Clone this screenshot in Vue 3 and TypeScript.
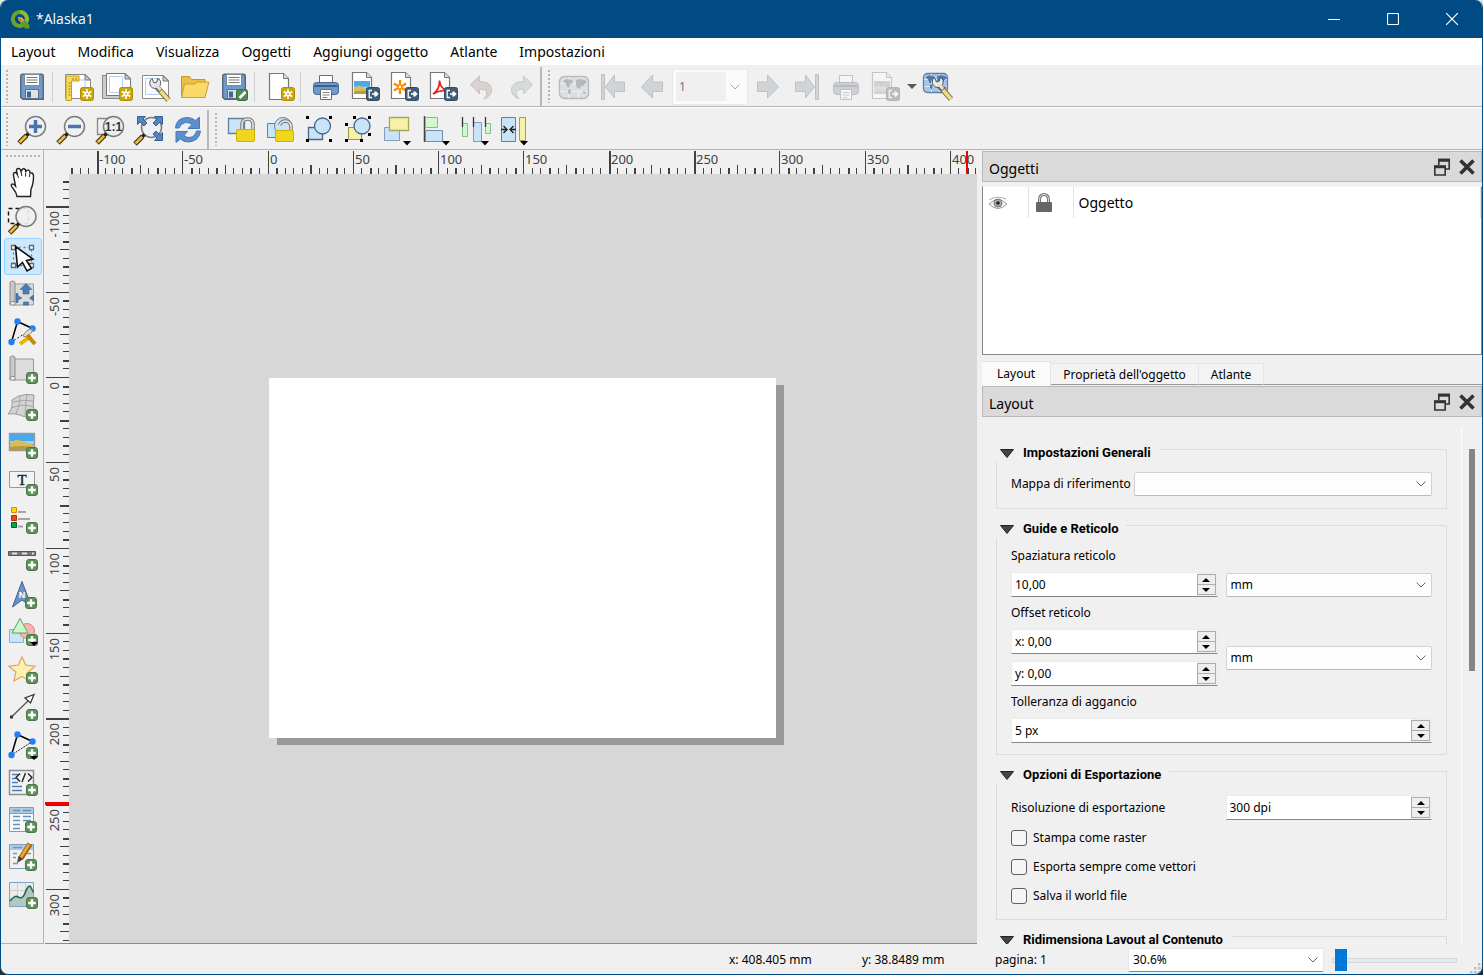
<script setup lang="ts">
import { computed, onBeforeUnmount, onMounted, ref } from 'vue'

interface Tool {
  id: string
  label: string
  sep?: boolean
  disabled?: boolean
  faded?: boolean
}

const menus = ['Layout', 'Modifica', 'Visualizza', 'Oggetti', 'Aggiungi oggetto', 'Atlante', 'Impostazioni']

/* badges shared by several icons */
const plus = (x: number, y: number) =>
  `<g transform="translate(${x} ${y})"><rect x=".5" y=".5" width="11" height="11" rx="2.5" fill="#5c915b" stroke="#477a47"/><path d="M6 2.2v7.6M2.2 6h7.6" stroke="#fff" stroke-width="2.4"/></g>`
const sun = (x: number, y: number) =>
  `<g transform="translate(${x} ${y})"><rect x=".5" y=".5" width="13" height="13" rx="2" fill="#cba60a" stroke="#b28f00"/><circle cx="7" cy="7" r="2.6" fill="#fff"/><path d="M7 2v10M2.7 4.5l8.6 5M2.7 9.5l8.6-5" stroke="#fff" stroke-width="1.5"/><circle cx="7" cy="7" r="1" fill="#cba60a"/></g>`
const exp = (x: number, y: number) =>
  `<g transform="translate(${x} ${y})"><rect x=".5" y=".5" width="13" height="13" rx="2" fill="#415d78" stroke="#34495e"/><path d="M6 3.5H3.2v7H6M6 7h5.5M9 4.5v5M9.4 4.8L11.8 7 9.4 9.2" fill="none" stroke="#fff" stroke-width="1.3"/></g>`
const lens = (x: number, y: number) =>
  `<g transform="translate(${x} ${y})"><circle cx="0" cy="0" r="10" fill="#eef0f1" fill-opacity=".9" stroke="#7b7b7b" stroke-width="1.5"/><path d="M-7 7l-3 3" stroke="#222" stroke-width="3.5"/><path d="M-9 9l-7.5 7.5" stroke="#4d4018" stroke-width="5"/><path d="M-9.4 9.4l-6.5 6.5" stroke="#f2bd3d" stroke-width="2.6"/></g>`
const floppy =
  `<path d="M4.7 5.2q0-2 2-2h18.6q2 0 2 2v23H6.7l-2-2z" fill="#6f9acb" stroke="#53657b" stroke-width="1.4"/><path d="M8.5 3.5h15v11h-15z" fill="#fff" stroke="#7c8894"/><path d="M10.5 6.5h11M10.5 9h11M10.5 11.5h11" stroke="#777" stroke-width="1.2"/><path d="M9.5 18.5h13v9h-13z" fill="#dfe3e8" stroke="#5f6e80"/><path d="M11 20.5h4v6h-4z" fill="#3c6596"/>`
const printer =
  `<path d="M9.5 4.5h13v8h-13z" fill="#fff" stroke="#6c6c6c"/><rect x="3.5" y="11.5" width="25" height="12" rx="3" fill="#6f9acb" stroke="#43658f"/><path d="M4.500 15h23" stroke="#3f5f88" stroke-width="2"/><path d="M10.500 18.500h11v10h-11z" fill="#fff" stroke="#6c6c6c"/><path d="M12.500 21.500h7M12.500 24h7M12.500 26.500h5" stroke="#888"/>`
const sheet = '<path d="M3.500 1.500h14l5 5v21h-19z" fill="#fff" stroke="#777" stroke-width="1.2"/><path d="M17.500 1.500v5h5" fill="#ddd" stroke="#777"/>'
const picture = (x: number, y: number, w: number, h: number) =>
  `<svg x="${x}" y="${y}" width="${w}" height="${h}" viewBox="0 0 24 16" preserveAspectRatio="none"><path d="M0 0h24v16H0z" fill="#4aa8ee"/><path d="M0 7h24v3H0z" fill="#9dd2f5"/><path d="M0 9l6.500-3.500L24 11v5H0z" fill="#d8bd5e"/><path d="M0 13q12-2 24 0v3H0z" fill="#b79b38"/></svg>`
const down = '<path d="M22 27h8l-4 4.500z" fill="#000"/>'
const world =
  `<path d="M5 10l4-2 5 1 1 3-3 1-1 4-2-1-1-3zM18 9l3-1 6 1 2 3-3 1-1 3-2-2-1 4-3-1-1-4zM10 18l3 1-1 5-2-2zM25 20l3 1-1 2-2-1z"/>`
const wrench =
  `<path d="M15 13.500L27 27" stroke="#6f6840" stroke-width="5.500"/><path d="M19 18l8 9" stroke="#f1dc84" stroke-width="3.500"/><path d="M18 6.500a5.500 5.500 0 1 1-7.500-1l2 4.500 3-1 .5-3.500z" fill="#e8eaec" stroke="#555"/><path d="M14 11l5 6" stroke="#dfe2e4" stroke-width="3"/>`
const nodes = (dash: string) =>
  `<path d="M10.500 5.500L4.500 26" stroke="#000" stroke-width="1.500"/><path d="M10.500 5.500l15 7" stroke="#000" stroke-width="1.500"/><path d="M25.500 12.500L4.500 26" stroke="#222" stroke-dasharray="${dash}"/><circle cx="10.500" cy="5.500" r="3.200" fill="#237df5"/><circle cx="25.500" cy="12.500" r="3.200" fill="#237df5"/><circle cx="4.500" cy="26" r="3.200" fill="#237df5"/>`
const corners = '<path d="M3 2h3v3H3zM26 2h3v3h-3zM3 25h3v3H3zM26 25h3v3h-3z" fill="#000"/>'
const scroll = '<path d="M6 5h20.500v21H6z" fill="#dcdcdc" stroke="#999"/><path d="M3 4q0-2 2.500-2T8 4v18.500H5.500Q3 22.500 3 25z" fill="#c9c9c9" stroke="#8d8d8d"/><path d="M3 25q0-2.500 2.500-2.500H8V26H3z" fill="#eee" stroke="#8d8d8d"/>'
const lock = '<path d="M17 16v-5q0-6 5.500-6t5.500 6v5" fill="none" stroke="#777" stroke-width="3.600"/><path d="M17 16v-5q0-6 5.500-6t5.500 6v5" fill="none" stroke="#e6e6e6" stroke-width="1.600"/><rect x="11.500" y="15.500" width="18" height="12" rx="1.500" fill="#f0d61c" stroke="#cfb000"/>'

const icons: Record<string, string> = {
  save: floppy,
  newLayout: `<path d="M3.500 3.500h20l5 5v19h-25z" fill="#fff" stroke="#888"/><path d="M23 3.500v5.500h5.500z" fill="#ccc" stroke="#777"/><path d="M12 9h11v15" fill="none" stroke="#b9cdf2"/><path d="M4 5h13v5H9.500v19.500H4z" fill="#f6d95e" stroke="#c79f10"/><path d="M6.500 12h2M6.500 15h2M6.500 18h2M6.500 21h2M6.500 24h2M11 7v2M14 7v2" stroke="#a37c00"/>${sun(18, 16)}`,
  duplicate: `<path d="M1.500 4.500h22v23h-22z" fill="#ccc" stroke="#888"/><path d="M5.500 2.500h19l5 5v17h-24z" fill="#fff" stroke="#777"/><path d="M24 2.500V8h5.500z" fill="#ccc" stroke="#777"/><path d="M8.500 5.500h13v16h-13z" fill="none" stroke="#b9cdf2"/>${sun(18, 16)}`,
  manager: `<path d="M2.500 4.500h21l5 5v18h-26z" fill="#fff" stroke="#888"/><path d="M23 4.500V10h5.500z" fill="#ccc" stroke="#777"/><path d="M5.500 7.500h14v16h-14z" fill="#f7faff" stroke="#b9cdf2"/><g transform="translate(1.500 2)">${wrench}</g>`,
  open: `<path d="M2.500 26V5.500h8l2 3h13.500V12" fill="#e9bf44" stroke="#c29620"/><path d="M2.500 26.500l3-13.500H16l2-2h12l-4 15.500z" fill="#fbd968" stroke="#c9a032"/>`,
  saveTemplate: `${floppy}<rect x="18.500" y="18.500" width="11" height="11" rx="2" fill="#4f8a57" stroke="#35703d"/><path d="M21.500 27l6-6" stroke="#fff" stroke-width="2.600"/>`,
  addPage: `<g transform="translate(2 1)">${sheet}</g>${sun(17, 16)}`,
  print: printer,
  exportImage: `${sheet}${picture(5, 10, 16, 13)}${exp(17, 16)}`,
  exportSvg: `${sheet}<path d="M12 9v14M5.800 12.500l12.400 7M5.800 19.500l12.400-7" stroke="#fb8c00" stroke-width="2.400"/><circle cx="12" cy="16" r="1.200" fill="#fff"/>${exp(17, 16)}`,
  exportPdf: `${sheet}<path d="M6 23q7-5 6.500-13.500Q13 17 20 20q-7-1.500-14 3z" fill="none" stroke="#e2231a" stroke-width="1.700"/>${exp(17, 16)}`,
  undo: '<path d="M4.500 13.500l9-8.500v5.500q12 0 12 8.500 0 6-7.500 9 4-4.500 2.500-7.500-1.500-2.500-7-2.500v5z" fill="#d8d3d0" stroke="#c8c1bd"/>',
  redo: '<path d="M27.500 13.500l-9-8.500v5.500q-12 0-12 8.500 0 6 7.500 9-4-4.500-2.500-7.500 1.500-2.500 7-2.500v5z" fill="#d6dad8" stroke="#c5cbc9"/>',
  atlas: `<rect x="1.500" y="5.500" width="29" height="22" rx="5" fill="#dcdfe0" stroke="#b7babc" stroke-width="1.400"/><path d="M2 12.500h28M2 20.500h28M10.500 6v21M20.500 6v21" stroke="#eff0f1"/><g fill="#b4b8bb">${world}</g>`,
  first: '<path d="M4.500 3.500h3v25h-3zM27.500 11v9.500H17.500V27L8.500 16l9-12v7z" fill="#d0d4d7" stroke="#bdc1c4"/>',
  prev: '<path d="M26.500 11v9.500H16.500V27L5.500 16l11-12v7z" fill="#d0d4d7" stroke="#bdc1c4"/>',
  next: '<path d="M5.500 11v9.500h10V27l11-11-11-12v7z" fill="#d0d4d7" stroke="#bdc1c4"/>',
  last: '<path d="M24.500 3.500h3v25h-3zM4.500 11v9.500h10V27l9-11-9-12v7z" fill="#d0d4d7" stroke="#bdc1c4"/>',
  atlasSettings: `<rect x="1.500" y="2.500" width="24" height="19" rx="4" fill="#a9c6e8" stroke="#5d7fa8" stroke-width="1.300"/><path d="M2 8.500h23M2 15.500h23M9.500 3v18M17.500 3v18" stroke="#dbe9f7"/><g fill="#4d78aa" transform="translate(-1 -3) scale(.9)">${world}</g><g transform="translate(2 1)">${wrench}</g>`,
  zoomIn: `${lens(19.5, 12.5)}<path d="M19.500 6v13M13 12.500h13" stroke="#4a74ab" stroke-width="3.500"/>`,
  zoomOut: `${lens(19.5, 12.5)}<path d="M13 12.500h13" stroke="#4a74ab" stroke-width="3.500"/>`,
  zoomActual: `<path d="M3.500 4.500h18v16h-18z" fill="#eee" stroke="#888" stroke-width="1.300"/>${lens(19.5, 12.5)}<text x="19.500" y="17" text-anchor="middle" font-family="Liberation Sans, sans-serif" font-size="12" font-weight="700" fill="#333">1:1</text>`,
  zoomFull: `${lens(18.5, 13.5)}<path d="M4.500 2.500h8L10 5l4 4-3 3-4-4-2.500 2.500zM29.500 2.500h-8L24 5l-4 4 3 3 4-4 2.500 2.500zM29.500 26.500h-8L24 24l-4-4 3-3 4 4 2.500-2.500z" fill="#5285bd" stroke="#385f8f"/>`,
  refresh: '<path d="M3.500 14Q4 4 15 3.500q5 0 8.500 3l4-3.500v11.500H16l4-4q-3-2.500-6.500-2-5 1-6.500 5.500z" fill="#5d8fd0" stroke="#4778b8"/><path d="M28.500 17q-1 10-12 11-5 0-8-3l-4.500 3.500V17.500H15.500l-3.500 4q3 2.500 6 2 5-1 6.500-6.500z" fill="#5d8fd0" stroke="#4778b8"/>',
  lock: `<path d="M3.500 4.500h16v15h-16z" fill="#c8e4f6" stroke="#5a83a6" stroke-width="1.300"/>${lock}`,
  unlock: `<path d="M3.500 9.500h14v14h-14z" fill="#c8e4f6" stroke="#5a83a6"/><circle cx="19" cy="12" r="8.500" fill="#c8e4f6" stroke="#5a83a6"/><path d="M15.500 11q2-4.500 7-4 5.500 1.500 4.500 9" fill="none" stroke="#777" stroke-width="3.600"/><path d="M15.500 11q2-4.500 7-4 5.500 1.500 4.500 9" fill="none" stroke="#e6e6e6" stroke-width="1.600"/><rect x="11.500" y="16.500" width="18" height="11" rx="1.500" fill="#f0d61c" stroke="#cfb000"/>`,
  group: `<path d="M5.500 13.500h14v12h-14z" fill="#c8e4f6" stroke="#46658a" stroke-width="1.300"/><circle cx="19.500" cy="12" r="8" fill="#c8e4f6" stroke="#46658a" stroke-width="1.300"/>${corners}`,
  ungroup: `<path d="M6.500 13.500h13v12h-13z" fill="#f5f1a8" stroke="#9a944b"/><circle cx="20" cy="12" r="8" fill="#c8e4f6" stroke="#46658a" stroke-width="1.300"/><path d="M11 2h3v3h-3zM26 2h3v3h-3zM3 9h3v3H3zM26 19h3v3h-3zM3 25h3v3H3zM18 25h3v3h-3z" fill="#000"/>`,
  raise: `<path d="M3.500 13.500h15v13h-15z" fill="#c8e4f6" stroke="#7f9fb8"/><path d="M8.500 3.500h19v13h-19z" fill="#f5f1a8" stroke="#a8a45b" stroke-width="1.300"/>${down}`,
  align: `<path d="M4.500 2v26" stroke="#444" stroke-width="1.500"/><path d="M5.500 3.500h12v10h-12z" fill="#cdfbcf" stroke="#87bd89"/><path d="M5.500 16.500h17v11h-17z" fill="#c8e4f6" stroke="#6f8ea8"/>${down}`,
  distribute: `<path d="M3.500 9.500h5v13h-5z" fill="#cdfbcf" stroke="#87bd89"/><path d="M14.500 8.500h8v19h-8z" fill="#c8e4f6" stroke="#7f9fb8"/><path d="M26.500 9.500h5v10h-5z" fill="#cdfbcf" stroke="#87bd89"/><path d="M3.500 3v10M14.500 3v10M26.500 3v10" stroke="#333" stroke-width="1.300"/>${down}`,
  resize: `<path d="M3.500 3.500h14v24h-14z" fill="#c8e4f6" stroke="#5f80a0"/><path d="M21.500 3.500h6v23h-6z" fill="#f5f1a8" stroke="#a39f55"/><path d="M3 15.500h5.500M5.500 12l3.500 3.500L5.500 19M18 15.500h-5.500M15.500 12L12 15.500l3.500 3.500" fill="none" stroke="#222" stroke-width="1.400"/>${down}`,

  pan: '<path d="M10 30.500q-.5-4-3.500-7.500-3-3.500-2-4.500 1.500-1.500 4 1.500L6.500 9.500Q6 6.500 8 6.500t2.500 2.500L9.500 5Q9.500 2.500 11.500 2.500T14 5.500L14.500 5q.5-2.500 2.500-2.200T18.700 6l.3-.5q.8-1.800 2.500-1.300T23 7l.5-.3q3 0 3 3.300 0 8-2.500 13l-.5 7.500z" fill="#fff" stroke="#222" stroke-width="1.400"/><path d="M10.500 9l1 3M14.200 6l.6 4M18.700 6.500l-.1 4M22.800 8l-.5 3" fill="none" stroke="#222"/>',
  zoomTool: `<path d="M1.500 4.500h20v15h-20z" fill="none" stroke="#111" stroke-width="1.400" stroke-dasharray="4 3"/>${lens(19, 12.5)}`,
  select: '<path d="M6.500 6.500h18v18h-18z" fill="none" stroke="#777" stroke-width="1.300" stroke-dasharray="2 3"/><path d="M4.500 4.500h4v4h-4zM22.500 4.500h4v4h-4zM4.500 22.500h4v4h-4zM22.500 22.500h4v4h-4z" fill="#fff" stroke="#666" stroke-width="1.300"/><path d="M8.500 5.500l2 20.500 5-4.500 4.500 8.500 4.500-2.500-5-8 6.500-1.500z" fill="#fff" stroke="#111" stroke-width="1.600"/>',
  moveContent: `${scroll}<path d="M19 4.500l6 6h-3v4.500h-6v-4.500h-3zM9 14.500h2v2.500l4 2-4 2v2.500H9zM26.500 16v6l-4-3zM16.500 23h5v3h-5z" fill="#4b7cb0" stroke="#3a6696" stroke-width=".6"/>`,
  editNodes: `${nodes('2 2')}<path d="M16 20q3-7 10-7-1 5-7 8z" fill="#ddd" stroke="#888"/><path d="M13 28l11-8" stroke="#e5b800" stroke-width="4"/><path d="M20 19l8 9" stroke="#c9850c" stroke-width="4"/>`,
  addMap: `${scroll}${plus(19, 18)}`,
  add3d: `<path d="M1 23q5-5 4-14 6-5 14-5.500l8 .5q-2 10 1 20-8 4-15 0-6-2-12-1z" fill="#d4d4d4" stroke="#999"/><path d="M4 17q12-5 23-1M6 11q10-3 21-1M9 23q4-9 4-18M18 25q0-10 2-21" fill="none" stroke="#a5a5a5"/>${plus(19, 18)}`,
  addPicture: `${picture(3, 5, 24, 16)}<path d="M2.500 4.500h25v17h-25z" fill="none" stroke="#999" stroke-width="1.400"/>${plus(19, 18)}`,
  addLabel: `<path d="M2.500 5.500h25v16h-25z" fill="#f3f3f3" stroke="#999"/><text x="15" y="18.500" text-anchor="middle" font-family="Liberation Serif, serif" font-size="15" fill="#222" stroke="#222" stroke-width=".4">T</text>${plus(19, 18)}`,
  addLegend: `<path d="M4.500 3.500h5v5h-5z" fill="#ffd700" stroke="#e88a00"/><path d="M4.500 11.500h5v5h-5z" fill="#f04a12" stroke="#b62f00"/><path d="M4.500 18.500h5v5h-5z" fill="#00a651" stroke="#00602f"/><path d="M11 8h8M11 15h12M11 22.500h5" stroke="#a5a5a5" stroke-width="2"/>${plus(19, 18)}`,
  addScale: `<path d="M1.500 10.500h27v4h-27z" fill="#777" stroke="#555"/><path d="M5 12.500h5M15 12.500h5M25 12.500h2" stroke="#ddd" stroke-width="2"/>${plus(19, 18)}`,
  addNorth: `<path d="M15 2.500l9.500 25L15 21 5.500 28z" fill="#6c93c4" stroke="#3d5f8d"/><text x="15" y="19" text-anchor="middle" font-family="Liberation Sans, sans-serif" font-size="9" font-weight="700" fill="#fff">N</text>${plus(18, 18)}`,
  addShape: `<path d="M2.500 13.500h14v13h-14z" fill="#c8e4f6" stroke="#8ab0cc"/><circle cx="20" cy="15" r="7.500" fill="#f9b4b4" stroke="#d98585"/><path d="M13 2.500l8 14.500H5z" fill="#cdf7cb" stroke="#5ca35b"/>${plus(19, 18)}<path d="M23 26h8l-4 4z" fill="#000"/>`,
  addMarker: `<path d="M15 3l3.800 8.200 9.200 1-6.800 6 2 9-8.200-4.700L7 27l1.800-9L2 12.200l9.200-1z" fill="#fdefb0" stroke="#e0a76c" stroke-width="1.300"/>${plus(19, 18)}`,
  addArrow: `<path d="M4.500 26L23 8" stroke="#555" stroke-width="1.300"/><path d="M3 24.500h3v3H3z" fill="#333"/><path d="M27 3.500l-9 3.500 5.500 5z" fill="#fff" stroke="#333" stroke-width="1.300"/>${plus(19, 18)}`,
  addNodeItem: `${nodes('2 1')}${plus(19, 18)}<path d="M23 27h8l-4 4z" fill="#000"/>`,
  addHtml: `<path d="M2.500 4.500h24v24h-24z" fill="#f2f2f2" stroke="#8c8c8c" stroke-width="1.400"/><path d="M5 8.500h6M5 12.500h4M5 16.500h6M5 20.500h10M5 24.500h10" stroke="#4e80b8" stroke-width="1.600"/><path d="M13 7.500l-4 4 4 4M21 7.500l4 4-4 4M18.500 7l-3.500 9" fill="none" stroke="#222" stroke-width="1.400"/>${plus(19, 18)}`,
  addTable: `<path d="M2.500 3.500h24v24h-24z" fill="#f6fafd" stroke="#7f9cba"/><path d="M3 4h23v5H3z" fill="#a5cde8"/><path d="M2.500 9.500h24" stroke="#7f9cba"/><path d="M6 6.500h7M16 6.500h8M6 12.500h7M16 12.500h8M6 16.500h7M16 16.500h8M6 20.500h7M6 24.500h7" stroke="#6d8fb4" stroke-width="1.600"/>${plus(18, 17)}`,
  addManualTable: `<path d="M2.500 3.500h24v24h-24z" fill="#f1f1f1" stroke="#7f9cba"/><path d="M3 4h23v5H3z" fill="#a5cde8"/><path d="M6 6.500h9M6 12.500h4M6 16.500h3M6 22.500h5M20 12.500h4" stroke="#8495a8" stroke-width="1.500"/><path d="M23 3l-9 14" stroke="#a5660f" stroke-width="5.500"/><path d="M22 3.500L13.500 17" stroke="#eda83c" stroke-width="2.500"/><path d="M11.500 15l5 3-6.500 4z" fill="#444"/>${plus(18, 18)}`,
  addProfile: `<path d="M2.500 3.500h24v24h-24z" fill="#ececec" stroke="#7da3cc"/><path d="M3 11.500h23M3 19.500h23M10.500 4v23M18.500 4v23" stroke="#d0d0d0"/><path d="M3 22q5-7 9-3 4 2 6-4 4-11 6-6l2 5v13H3z" fill="#b3c9bf"/><path d="M3 22q5-7 9-3.500 4 1.500 6-4.500 4-10 6-5.500l2.500 5" fill="none" stroke="#1d6a54" stroke-width="1.600"/>${plus(19, 18)}`,
}

const fileTools: Tool[] = [
  { id: 'save', label: 'Salva progetto' },
  { id: 'newLayout', label: 'Nuovo layout', sep: true },
  { id: 'duplicate', label: 'Duplica layout' },
  { id: 'manager', label: 'Gestore layout' },
  { id: 'open', label: 'Aggiungi da modello' },
  { id: 'saveTemplate', label: 'Salva come modello' },
  { id: 'addPage', label: 'Aggiungi pagine', sep: true },
  { id: 'print', label: 'Stampa', sep: true },
  { id: 'exportImage', label: 'Esporta come immagine' },
  { id: 'exportSvg', label: 'Esporta come SVG' },
  { id: 'exportPdf', label: 'Esporta come PDF' },
  { id: 'undo', label: 'Annulla', disabled: true },
  { id: 'redo', label: 'Ripristina', disabled: true },
]
const atlasBefore: Tool[] = [
  { id: 'atlas', label: 'Anteprima atlante', disabled: true },
  { id: 'first', label: 'Primo elemento', disabled: true },
  { id: 'prev', label: 'Elemento precedente', disabled: true },
]
const atlasAfter: Tool[] = [
  { id: 'next', label: 'Elemento successivo', disabled: true },
  { id: 'last', label: 'Ultimo elemento', disabled: true },
  { id: 'print', label: 'Stampa atlante', disabled: true, faded: true },
  { id: 'exportImage', label: 'Esporta atlante', disabled: true, faded: true },
]
const viewTools: Tool[] = [
  { id: 'zoomIn', label: 'Ingrandisci' },
  { id: 'zoomOut', label: 'Rimpicciolisci' },
  { id: 'zoomActual', label: 'Zoom 100%' },
  { id: 'zoomFull', label: 'Zoom completo' },
  { id: 'refresh', label: 'Aggiorna vista' },
]
const actionTools: Tool[] = [
  { id: 'lock', label: 'Blocca oggetti' },
  { id: 'unlock', label: 'Sblocca oggetti' },
  { id: 'group', label: 'Raggruppa' },
  { id: 'ungroup', label: 'Separa' },
  { id: 'raise', label: 'Porta in primo piano' },
  { id: 'align', label: 'Allinea' },
  { id: 'distribute', label: 'Distribuisci' },
  { id: 'resize', label: 'Ridimensiona' },
]
const sideTools: Tool[] = [
  { id: 'pan', label: 'Sposta layout' },
  { id: 'zoomTool', label: 'Zoom' },
  { id: 'select', label: 'Seleziona oggetto' },
  { id: 'moveContent', label: 'Sposta contenuto' },
  { id: 'editNodes', label: 'Modifica nodi' },
  { id: 'addMap', label: 'Aggiungi mappa' },
  { id: 'add3d', label: 'Aggiungi mappa 3D' },
  { id: 'addPicture', label: 'Aggiungi immagine' },
  { id: 'addLabel', label: 'Aggiungi etichetta' },
  { id: 'addLegend', label: 'Aggiungi legenda' },
  { id: 'addScale', label: 'Aggiungi barra di scala' },
  { id: 'addNorth', label: 'Aggiungi freccia nord' },
  { id: 'addShape', label: 'Aggiungi forma' },
  { id: 'addMarker', label: 'Aggiungi simbolo' },
  { id: 'addArrow', label: 'Aggiungi freccia' },
  { id: 'addNodeItem', label: 'Aggiungi nodo' },
  { id: 'addHtml', label: 'Aggiungi HTML' },
  { id: 'addTable', label: 'Aggiungi tabella attributi' },
  { id: 'addManualTable', label: 'Aggiungi tabella fissa' },
  { id: 'addProfile', label: 'Aggiungi profilo' },
]
const activeTool = ref('select')

/* one ruler tick every 5 mm of paper at the current zoom */
interface Tick {
  pos: number
  size: number
  thick: number
  label: string
}
const STEP = 8.53
function ticks(origin: number, length: number): Tick[] {
  const out: Tick[] = []
  for (let i = Math.ceil(-origin / STEP); origin + i * STEP < length; i++) {
    const major = i % 10 === 0
    const pos = Math.floor(origin + i * STEP)
    const extra = Math.floor(i * 0.286 + 0.72) !== Math.floor((i - 1) * 0.286 + 0.72)
    out.push({
      pos,
      size: major ? 23 : i % 5 === 0 ? 9 : 6,
      thick: extra ? 2 : 1,
      label: major && pos + 24 < length ? String(i * 5) : '',
    })
  }
  return out
}
const canvas = ref<HTMLElement | null>(null)
const canvasWidth = ref(0)
const canvasHeight = ref(0)
const hTicks = computed(() => ticks(199, canvasWidth.value))
const vTicks = computed(() => ticks(203.5, canvasHeight.value))
let observer: ResizeObserver | undefined
function measure() {
  canvasWidth.value = canvas.value?.offsetWidth ?? 0
  canvasHeight.value = canvas.value?.offsetHeight ?? 0
}
onMounted(() => {
  measure()
  observer = new ResizeObserver(measure)
  if (canvas.value) observer.observe(canvas.value)
})
onBeforeUnmount(() => observer?.disconnect())

const tabs = ['Layout', "Proprietà dell'oggetto", 'Atlante']
const activeTab = ref('Layout')
const checks = ['Stampa come raster', 'Esporta sempre come vettori', 'Salva il world file']
const gridSpacing = ref('10,00')
const offsetX = ref('x: 0,00')
const offsetY = ref('y: 0,00')
const snapTolerance = ref('5 px')
const resolution = ref('300 dpi')
const zoomSlider = ref(2)
</script>

<template>
  <div class="window">
    <header class="titlebar">
      <svg class="logo" viewBox="0 0 20 20" aria-hidden="true">
        <path d="M10 3a7 7 0 1 0 4 12.700" fill="none" stroke="#6aa12a" stroke-width="4" />
        <path d="M10 3a7 7 0 0 1 6 10.500" fill="none" stroke="#8dbb35" stroke-width="4" />
        <path d="M10.500 10.500l3.500-.5 5.500 6v3.500h-4L10 14z" fill="#5b9a2c" />
        <path d="M8 8l4 .5 2 3-2.500 2L8.500 11z" fill="#f0b060" />
        <path d="M9 9l3.500 3.500" stroke="#e26a1c" stroke-width="1.500" />
      </svg>
      <h1>*Alaska1</h1>
      <div class="win-buttons">
        <button type="button" aria-label="Riduci a icona"><svg viewBox="0 0 12 12"><path d="M0 6.500h12" /></svg></button>
        <button type="button" aria-label="Ingrandisci finestra"><svg viewBox="0 0 12 12"><rect x=".5" y=".5" width="11" height="11" rx="1" /></svg></button>
        <button type="button" aria-label="Chiudi finestra"><svg viewBox="0 0 12 12"><path d="M0 0l12 12M12 0L0 12" /></svg></button>
      </div>
    </header>

    <nav class="menubar">
      <button v-for="m in menus" :key="m" type="button">{{ m }}</button>
    </nav>

    <div class="toolbar">
      <span class="grip"></span>
      <div class="tools">
        <template v-for="t in fileTools" :key="t.id">
          <span v-if="t.sep" class="sep"></span>
          <button type="button" class="tool" :aria-label="t.label" :disabled="t.disabled">
            <svg viewBox="0 0 32 32" v-html="icons[t.id]"></svg>
          </button>
        </template>
      </div>
      <span class="bar-end"></span>
      <span class="grip"></span>
      <div class="tools">
        <button v-for="t in atlasBefore" :key="t.label" type="button" class="tool" :aria-label="t.label" disabled>
          <svg viewBox="0 0 32 32" v-html="icons[t.id]"></svg>
        </button>
        <div class="page-combo">
          <input type="text" value="1" aria-label="Elemento atlante" disabled />
          <button type="button" aria-label="Elenco elementi" disabled>
            <svg viewBox="0 0 10 6"><path d="M.5.500L5 5 9.500.500" /></svg>
          </button>
        </div>
        <button v-for="t in atlasAfter" :key="t.label" type="button" class="tool" :class="{ faded: t.faded }" :aria-label="t.label" disabled>
          <svg viewBox="0 0 32 32" v-html="icons[t.id]"></svg>
        </button>
        <button type="button" class="drop" aria-label="Altre esportazioni">
          <svg viewBox="0 0 10 5"><path d="M0 0h10L5 5z" /></svg>
        </button>
        <button type="button" class="tool" aria-label="Impostazioni atlante">
          <svg viewBox="0 0 32 32" v-html="icons.atlasSettings"></svg>
        </button>
      </div>
    </div>

    <div class="toolbar second">
      <span class="grip"></span>
      <div class="tools">
        <button v-for="t in viewTools" :key="t.id" type="button" class="tool" :aria-label="t.label">
          <svg viewBox="0 0 32 32" v-html="icons[t.id]"></svg>
        </button>
      </div>
      <span class="bar-end"></span>
      <span class="grip"></span>
      <div class="tools">
        <button v-for="t in actionTools" :key="t.id" type="button" class="tool" :aria-label="t.label">
          <svg viewBox="0 0 32 32" v-html="icons[t.id]"></svg>
        </button>
      </div>
    </div>

    <main class="body">
      <div class="sidebar">
        <span class="side-grip"></span>
        <div class="side-tools">
          <button
            v-for="t in sideTools"
            :key="t.id"
            type="button"
            class="side-tool"
            :class="{ active: t.id === activeTool }"
            :aria-label="t.label"
            :aria-pressed="t.id === activeTool"
            @click="activeTool = t.id"
          >
            <svg viewBox="0 0 32 32" v-html="icons[t.id]"></svg>
          </button>
        </div>
      </div>

      <section class="view" aria-label="Area di layout">
        <svg class="ruler-h">
          <g v-for="t in hTicks" :key="t.pos">
            <rect :x="t.pos" :y="24 - t.size" :width="t.thick" :height="t.size" />
            <text v-if="t.label" :x="t.pos + 2" y="14">{{ t.label }}</text>
          </g>
          <rect class="mark" x="897" y="1" width="2" height="23" />
        </svg>
        <svg class="ruler-v">
          <g v-for="t in vTicks" :key="t.pos">
            <rect :x="24 - t.size" :y="t.pos" :width="t.size" :height="t.thick" />
            <text v-if="t.label" :transform="`translate(14 ${t.pos + 5}) rotate(-90)`" text-anchor="end">{{ t.label }}</text>
          </g>
          <rect class="mark" x="0" y="628" width="24" height="3" />
        </svg>
        <div ref="canvas" class="canvas"><div class="paper"></div></div>
      </section>

      <aside class="docks">
        <section class="dock">
          <header class="dock-title">
            <h2>Oggetti</h2>
            <button type="button" aria-label="Sgancia pannello Oggetti"><svg viewBox="0 0 18 18"><path d="M5.800 7V1.500h10.400v9.500H13" /><path d="M5 2.200h12" class="heavy" /><path d="M1.800 8.500h10.400v8.500H1.800z" /><path d="M1 8.700h12" class="heavy" /></svg></button>
            <button type="button" aria-label="Chiudi pannello Oggetti"><svg viewBox="0 0 18 18"><path d="M2.500 2.500l13 13M15.500 2.500l-13 13" class="cross" /></svg></button>
          </header>
          <div class="items">
            <table>
              <thead>
                <tr>
                  <th class="icon-col" aria-label="Visibile">
                    <svg class="eye" viewBox="0 0 20 14"><path d="M1 4q8-5 17-1" fill="none" stroke="#aaa" /><path d="M1 8q9-9 18 0-9 9-18 0z" fill="#f4f4f4" stroke="#999" /><circle cx="10" cy="7" r="4" fill="#aaa" stroke="#777" /><circle cx="10" cy="7" r="1.800" fill="#222" /></svg>
                  </th>
                  <th class="icon-col" aria-label="Bloccato">
                    <svg class="padlock" viewBox="0 0 16 20"><path d="M3.500 10V7q0-5.500 4.500-5.500T12.500 7v3" fill="none" stroke="#777" stroke-width="3" /><path d="M3.500 10V7q0-5.500 4.500-5.500T12.500 7v3" fill="none" stroke="#ddd" /><rect y="9" width="16" height="10" rx="1" fill="#666" /></svg>
                  </th>
                  <th>Oggetto</th>
                </tr>
              </thead>
            </table>
          </div>
        </section>

        <div class="tabs" role="tablist">
          <button
            v-for="t in tabs"
            :key="t"
            type="button"
            role="tab"
            :class="{ active: t === activeTab }"
            :aria-selected="t === activeTab"
            @click="activeTab = t"
          >{{ t }}</button>
          <span class="tab-rest"></span>
        </div>

        <section class="dock props">
          <header class="dock-title">
            <h2>Layout</h2>
            <button type="button" aria-label="Sgancia pannello Layout"><svg viewBox="0 0 18 18"><path d="M5.800 7V1.500h10.400v9.500H13" /><path d="M5 2.200h12" class="heavy" /><path d="M1.800 8.500h10.400v8.500H1.800z" /><path d="M1 8.700h12" class="heavy" /></svg></button>
            <button type="button" aria-label="Chiudi pannello Layout"><svg viewBox="0 0 18 18"><path d="M2.500 2.500l13 13M15.500 2.500l-13 13" class="cross" /></svg></button>
          </header>
          <div class="scroll">
            <div class="groups">
              <section class="group">
                <h3><svg viewBox="0 0 14 9"><path d="M.5.500h13L7 8.500z" /></svg>Impostazioni Generali</h3>
                <div class="row">
                  <label for="ref-map">Mappa di riferimento</label>
                  <div class="combo"><select id="ref-map"><option></option></select><svg viewBox="0 0 10 6"><path d="M.5.500L5 5 9.500.500" /></svg></div>
                </div>
              </section>

              <section class="group">
                <h3><svg viewBox="0 0 14 9"><path d="M.5.500h13L7 8.500z" /></svg>Guide e Reticolo</h3>
                <div class="stack">
                  <label for="spacing">Spaziatura reticolo</label>
                  <div class="pair">
                    <div class="spin"><input id="spacing" v-model="gridSpacing" type="text" /><span class="steps"><button type="button" aria-label="Aumenta spaziatura"><svg viewBox="0 0 8 4"><path d="M0 4h8L4 0z" /></svg></button><button type="button" aria-label="Riduci spaziatura"><svg viewBox="0 0 8 4"><path d="M0 0h8L4 4z" /></svg></button></span></div>
                    <div class="combo"><select aria-label="Unità spaziatura"><option>mm</option></select><svg viewBox="0 0 10 6"><path d="M.5.500L5 5 9.500.500" /></svg></div>
                  </div>
                  <label for="offset-x">Offset reticolo</label>
                  <div class="pair">
                    <div class="stacked">
                      <div class="spin"><input id="offset-x" v-model="offsetX" type="text" /><span class="steps"><button type="button" aria-label="Aumenta offset x"><svg viewBox="0 0 8 4"><path d="M0 4h8L4 0z" /></svg></button><button type="button" aria-label="Riduci offset x"><svg viewBox="0 0 8 4"><path d="M0 0h8L4 4z" /></svg></button></span></div>
                      <div class="spin"><input v-model="offsetY" type="text" aria-label="Offset y" /><span class="steps"><button type="button" aria-label="Aumenta offset y"><svg viewBox="0 0 8 4"><path d="M0 4h8L4 0z" /></svg></button><button type="button" aria-label="Riduci offset y"><svg viewBox="0 0 8 4"><path d="M0 0h8L4 4z" /></svg></button></span></div>
                    </div>
                    <div class="combo"><select aria-label="Unità offset"><option>mm</option></select><svg viewBox="0 0 10 6"><path d="M.5.500L5 5 9.500.500" /></svg></div>
                  </div>
                  <label for="snap">Tolleranza di aggancio</label>
                  <div class="spin"><input id="snap" v-model="snapTolerance" type="text" /><span class="steps"><button type="button" aria-label="Aumenta tolleranza"><svg viewBox="0 0 8 4"><path d="M0 4h8L4 0z" /></svg></button><button type="button" aria-label="Riduci tolleranza"><svg viewBox="0 0 8 4"><path d="M0 0h8L4 4z" /></svg></button></span></div>
                </div>
              </section>

              <section class="group">
                <h3><svg viewBox="0 0 14 9"><path d="M.5.500h13L7 8.500z" /></svg>Opzioni di Esportazione</h3>
                <div class="export">
                  <div class="pair">
                    <label for="dpi">Risoluzione di esportazione</label>
                    <div class="spin"><input id="dpi" v-model="resolution" type="text" /><span class="steps"><button type="button" aria-label="Aumenta risoluzione"><svg viewBox="0 0 8 4"><path d="M0 4h8L4 0z" /></svg></button><button type="button" aria-label="Riduci risoluzione"><svg viewBox="0 0 8 4"><path d="M0 0h8L4 4z" /></svg></button></span></div>
                  </div>
                  <div class="checks">
                    <label v-for="c in checks" :key="c"><input type="checkbox" />{{ c }}</label>
                  </div>
                </div>
              </section>

              <section class="group">
                <h3><svg viewBox="0 0 14 9"><path d="M.5.500h13L7 8.500z" /></svg>Ridimensiona Layout al Contenuto</h3>
                <div class="row"></div>
              </section>
            </div>
            <div class="scrollbar"><span class="thumb"></span></div>
          </div>
        </section>
      </aside>
    </main>

    <footer class="status">
      <span class="coord">x: 408.405 mm</span>
      <span class="coord">y: 38.8489 mm</span>
      <span class="coord">pagina: 1</span>
      <div class="combo zoom"><select aria-label="Livello di zoom"><option>30.6%</option></select><svg viewBox="0 0 10 6"><path d="M.5.500L5 5 9.500.500" /></svg></div>
      <input v-model="zoomSlider" class="slider" type="range" min="0" max="100" aria-label="Zoom" />
      <svg class="size-grip" viewBox="0 0 12 12"><path d="M9 1h2.500v2.500H9zM5 5h2.500v2.500H5zM9 5h2.500v2.500H9zM1 9h2.500v2.500H1zM5 9h2.500v2.500H5zM9 9h2.500v2.500H9z" fill="#bdbdbd" /></svg>
    </footer>
  </div>
</template>

<style>
body {
  margin: 0;
  background: linear-gradient(#e4e6e2 50%, #2b2b2b 50%);
}
</style>

<style scoped>
.window,
.window * {
  box-sizing: border-box;
}
.window {
  display: flex;
  flex-direction: column;
  height: 100vh;
  overflow: hidden;
  border: 1px solid #004b84;
  border-top: 0;
  border-radius: 8px;
  background: #f0f0f0;
  color: #000;
  font-family: "Noto Sans", "Open Sans", sans-serif;
  font-size: 12px;
  line-height: 18px;
}
button {
  margin: 0;
  padding: 0;
  border: 0;
  background: none;
  color: inherit;
  font: inherit;
}
input,
select {
  margin: 0;
  color: inherit;
  font: inherit;
}
h1,
h2,
h3 {
  margin: 0;
  font-weight: 400;
}
svg {
  display: block;
  flex: none;
}

/* title and menu */
.titlebar {
  display: flex;
  align-items: center;
  height: 38px;
  flex: none;
  padding: 0 1px 0 9px;
  background: #004b84;
  color: #fff;
}
.logo {
  width: 20px;
  height: 20px;
}
.titlebar h1 {
  flex: 1;
  margin-left: 6px;
  font-family: "Open Sans", sans-serif;
  font-size: 14px;
}
.win-buttons {
  display: flex;
}
.win-buttons button {
  display: grid;
  place-items: center;
  width: 59px;
  height: 38px;
}
.win-buttons svg {
  width: 12px;
  height: 12px;
  fill: none;
  stroke: #fff;
  stroke-width: 1.2;
}
.menubar {
  display: flex;
  align-items: center;
  gap: 22px;
  height: 27px;
  flex: none;
  padding-left: 10px;
  background: #fff;
  font-size: 14px;
}

/* toolbars */
.toolbar {
  display: flex;
  align-items: center;
  height: 42px;
  flex: none;
  padding-top: 2px;
  border-bottom: 1px solid #b4b4b4;
}
.toolbar.second {
  height: 43px;
  border-top: 1px solid #fff;
}
.grip {
  width: 2px;
  height: 33px;
  margin: 0 5px;
  background: repeating-linear-gradient(#b5b5b5 0 2px, transparent 2px 4px);
}
.tools {
  display: flex;
  align-items: center;
  gap: 1px;
}
.tool {
  display: grid;
  place-items: center;
  width: 38px;
  height: 38px;
}
.tool svg {
  width: 32px;
  height: 32px;
}
.faded svg {
  filter: grayscale(.8);
  opacity: .35;
}
.sep {
  width: 6px;
  height: 30px;
  border-left: 1px solid #cfcfcf;
}
.bar-end {
  align-self: stretch;
  width: 2px;
  margin-right: 1px;
  background: #b8b8b8;
}
.page-combo {
  display: flex;
  align-items: center;
  width: 76px;
  height: 36px;
  padding: 3px;
  border: 1px solid #e8e8e8;
  background: #fbfbfb;
}
.page-combo input {
  width: 50px;
  height: 29px;
  padding: 0 3px;
  border: 0;
  background: #f0f0f0;
  color: #777;
}
.page-combo button {
  display: grid;
  place-items: center;
  flex: 1;
}
.page-combo svg,
.combo svg {
  width: 10px;
  height: 6px;
  fill: none;
  stroke: #666;
}
.page-combo svg {
  stroke: #aaa;
}
.drop {
  display: grid;
  place-items: center;
  width: 13px;
  height: 38px;
}
.drop svg {
  width: 10px;
  height: 5px;
  fill: #5a5a5a;
}

/* main area */
.body {
  display: flex;
  flex: 1;
  min-height: 0;
}
.sidebar {
  width: 43px;
  overflow: hidden;
  border-right: 1px solid #b4b4b4;
  border-bottom: 1px solid #b4b4b4;
}
.side-grip {
  display: block;
  width: 34px;
  height: 2px;
  margin: 5px 0 6px 5px;
  background: repeating-linear-gradient(90deg, #b5b5b5 0 2px, transparent 2px 4px);
}
.side-tools {
  display: flex;
  flex-direction: column;
  padding-left: 3px;
}
.side-tool {
  display: grid;
  place-items: center;
  width: 38px;
  height: 37px;
  flex: none;
  border: 1px solid transparent;
  border-radius: 3px;
}
.side-tool:nth-child(odd) {
  margin-bottom: 1px;
}
.side-tool.active {
  border-color: #99d1ff;
  background: #cce8ff;
}
.side-tool svg {
  width: 32px;
  height: 32px;
}
.view {
  display: grid;
  grid-template: 24px minmax(0, 1fr) / 24px minmax(0, 1fr);
  flex: 1;
  min-width: 0;
  margin-left: 1px;
  border-bottom: 1px solid #8a8a90;
}
.ruler-h {
  grid-area: 1 / 2;
  width: 100%;
  height: 24px;
}
.ruler-v {
  grid-area: 2 / 1;
  width: 24px;
  height: 100%;
}
.ruler-h,
.ruler-v {
  overflow: hidden;
  fill: #404040;
  font-size: 13px;
}
.mark {
  fill: #f00000;
}
.canvas {
  grid-area: 2 / 2;
  display: grid;
  place-items: center;
  padding: 0 1px 1px 0;
  overflow: hidden;
  background: #d7d7d7;
}
.paper {
  width: 507px;
  height: 360px;
  background: #fff;
  box-shadow: 8px 7px 0 #999;
}

/* docks */
.docks {
  display: flex;
  flex-direction: column;
  width: 505px;
  flex: none;
  padding: 1px 0 0 5px;
}
.dock-title {
  display: flex;
  align-items: center;
  gap: 7px;
  height: 31px;
  flex: none;
  padding: 0 5px 0 6px;
  border: 1px solid #b8b8b8;
  background: #dadada;
}
.dock-title h2 {
  flex: 1;
  padding-top: 4px;
  font-size: 14px;
}
.dock-title svg {
  width: 18px;
  height: 18px;
  fill: none;
  stroke: #333;
  stroke-width: 1.6;
}
.heavy {
  stroke-width: 3;
}
.cross {
  stroke-width: 3.6;
}
.items {
  height: 169px;
  margin-top: 4px;
  border: 1px solid #86868c;
  border-top-color: #f4f4f4;
  background: #fff;
}
.items table {
  width: 100%;
  border-collapse: collapse;
}
.items th {
  height: 31px;
  padding: 0 5px;
  border-right: 1px solid #e3e3e3;
  text-align: left;
  font-size: 14px;
  font-weight: 400;
}
.items .icon-col {
  width: 45px;
}
.eye {
  width: 20px;
  height: 14px;
}
.padlock {
  width: 16px;
  height: 20px;
  margin-left: 2px;
}
.tabs {
  display: flex;
  align-items: flex-end;
  height: 25px;
  margin-top: 6px;
}
.tabs button {
  height: 22px;
  padding: 1px 12px 0;
  border: 1px solid #e4e4e4;
  border-left: 0;
  border-bottom-color: #999;
  background: #f3f3f3;
  margin-bottom: 1px;
}
.tabs button.active {
  height: 25px;
  margin-bottom: 0;
  padding: 0 15px;
  border-bottom: 0;
  background: #fafafa;
}
.tab-rest {
  flex: 1;
  height: 1px;
  margin-bottom: 1px;
  background: #999;
}
.props {
  display: flex;
  flex-direction: column;
  flex: 1;
  min-height: 0;
}
.scroll {
  display: flex;
  flex: 1;
  min-height: 0;
  overflow: hidden;
}
.groups {
  display: flex;
  flex-direction: column;
  gap: 16px;
  flex: 1;
  padding: 32px 14px 0;
}
.scrollbar {
  width: 21px;
  margin-top: 11px;
  padding: 21px 0 0 7px;
  border-left: 1px solid #fff;
}
.thumb {
  display: block;
  width: 6px;
  height: 222px;
  background: #858585;
}
.group {
  border: 1px solid #dcdcdc;
  padding: 0 14px 9px;
}
.group h3 {
  display: flex;
  align-items: center;
  gap: 9px;
  width: fit-content;
  height: 18px;
  margin: -6px 0 0 -15px;
  padding: 0 8px 0 4px;
  background: #f0f0f0;
  font-family: Roboto, "Noto Sans", sans-serif;
  font-size: 13px;
  font-weight: 700;
}
.group h3 svg {
  width: 14px;
  height: 9px;
  fill: #444;
  stroke: #222;
}
.row {
  display: flex;
  align-items: center;
  gap: 3px;
  padding: 10px 0 3px;
}
.row .combo {
  flex: 1;
}
.stack {
  display: flex;
  flex-direction: column;
  gap: 7px;
  padding: 9px 0 2px;
}
.pair {
  display: grid;
  grid-template-columns: minmax(0, 1fr) minmax(0, 1fr);
  gap: 8px;
  align-items: center;
}
.stacked {
  display: flex;
  flex-direction: column;
  gap: 7px;
}
.combo {
  display: grid;
  align-items: center;
  height: 24px;
  border: 1px solid #d2d2d2;
  border-bottom-color: #bababa;
  border-radius: 2px;
  background: #fdfdfd;
}
.combo select {
  grid-area: 1 / 1;
  width: 100%;
  height: 22px;
  padding: 0 4px;
  border: 0;
  background: none;
  appearance: none;
}
.combo svg {
  grid-area: 1 / 1;
  justify-self: end;
  margin-right: 5px;
  pointer-events: none;
}
.spin {
  display: flex;
  height: 25px;
  border: 1px solid #ebebeb;
  border-bottom-color: #868686;
  background: #fff;
}
.spin input {
  flex: 1;
  min-width: 0;
  padding: 0 3px;
  border: 0;
  background: none;
}
.steps {
  display: flex;
  flex-direction: column;
  width: 20px;
  background: #f0f0f0;
  padding: 1px 1px 1px 0;
}
.steps button {
  display: grid;
  place-items: center;
  flex: 1;
  border: 1px solid #adadad;
  background: #eee;
}
.steps button + button {
  border-top: 0;
}
.steps svg {
  width: 8px;
  height: 4px;
}
.export {
  padding-top: 11px;
}
.checks {
  display: flex;
  flex-direction: column;
  padding-top: 3px;
}
.checks label {
  display: flex;
  align-items: center;
  gap: 6px;
  height: 29px;
}
.checks input {
  width: 16px;
  height: 16px;
  border: 1px solid #5f5f5f;
  border-radius: 3px;
  background: #f5f5f5;
  appearance: none;
}

/* status bar */
.status {
  display: flex;
  align-items: center;
  justify-content: flex-end;
  height: 30px;
  flex: none;
  padding: 2px 1px 0 0;
}
.coord {
  width: 133px;
}
.combo.zoom {
  width: 196px;
  border-color: #e6e6e6;
  border-bottom-color: #868686;
  background: #fff;
}
.slider {
  width: 125px;
  height: 22px;
  margin: 0 12px 0 8px;
  background: none;
  appearance: none;
}
.slider::-webkit-slider-runnable-track {
  height: 5px;
  border: 1px solid #d6d6d6;
  background: #e7eaea;
}
.slider::-webkit-slider-thumb {
  width: 12px;
  height: 22px;
  margin-top: -10px;
  background: #0078d7;
  appearance: none;
}
.size-grip {
  align-self: flex-end;
  width: 12px;
  height: 12px;
}
</style>
